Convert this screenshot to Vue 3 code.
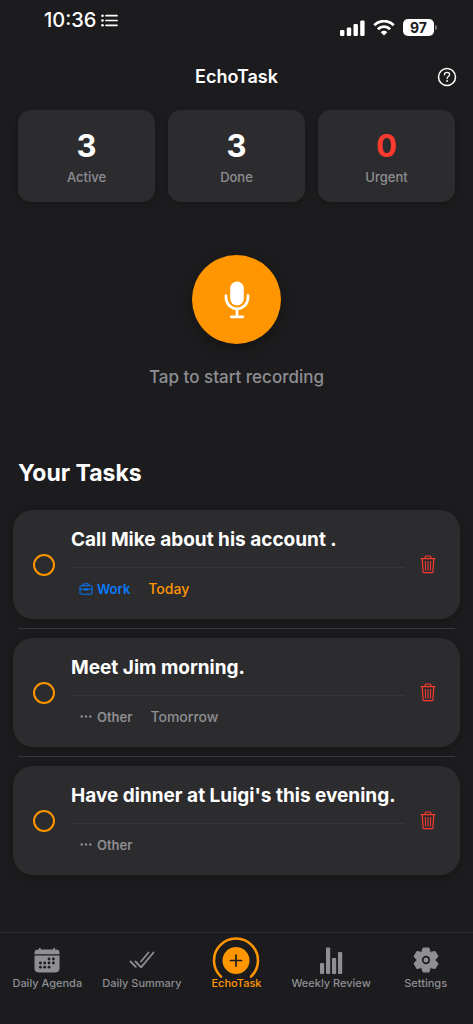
<script setup>
import { ref } from 'vue'

const stats = [
  { value: 3, label: 'Active' },
  { value: 3, label: 'Done' },
  { value: 0, label: 'Urgent', urgent: true },
]

const tasks = ref([
  { id: 1, title: 'Call Mike about his account .', category: 'Work', due: 'Today', done: false },
  { id: 2, title: 'Meet Jim morning.', category: 'Other', due: 'Tomorrow', done: false },
  { id: 3, title: "Have dinner at Luigi's this evening.", category: 'Other', due: '', done: false },
])

const tabs = [
  { id: 'agenda', label: 'Daily Agenda' },
  { id: 'summary', label: 'Daily Summary' },
  { id: 'echo', label: 'EchoTask' },
  { id: 'review', label: 'Weekly Review' },
  { id: 'settings', label: 'Settings' },
]
const active = ref('echo')

const calendarDots = [
  [15, 12], [19.4, 12],
  [6.4, 16], [10.7, 16], [15, 16], [19.4, 16],
  [6.4, 20.2], [10.7, 20.2], [15, 20.2],
]

const gearTeeth = [0, 60, 120, 180, 240, 300]

function removeTask(id) {
  tasks.value = tasks.value.filter((t) => t.id !== id)
}
</script>

<template>
  <div class="screen">
    <div class="status">
      <div class="clock">
        <span>10:36</span>
        <svg width="17" height="13" viewBox="0 0 17 13" aria-hidden="true">
          <g fill="#fff">
            <circle cx="1.5" cy="1.7" r="1.3" /><circle cx="1.5" cy="6.5" r="1.3" /><circle cx="1.5" cy="11.3" r="1.3" />
          </g>
          <path d="M5 1.7h11M5 6.5h11M5 11.3h11" stroke="#fff" stroke-width="1.7" stroke-linecap="round" />
        </svg>
      </div>
      <div class="signals">
        <svg width="25" height="16" viewBox="0 0 25 16" fill="#fff" aria-hidden="true">
          <rect x="0" y="10" width="4.4" height="6" rx="1.2" />
          <rect x="6.8" y="7.5" width="4.4" height="8.5" rx="1.2" />
          <rect x="13.5" y="4" width="4.4" height="12" rx="1.2" />
          <rect x="20.2" y="0.5" width="4.4" height="15.5" rx="1.2" />
        </svg>
        <svg width="22" height="16" viewBox="0 0 22 16" aria-hidden="true">
          <g fill="none" stroke="#fff" stroke-width="2.9">
            <path d="M1.3 5.2a13.7 13.7 0 0 1 19.4 0" />
            <path d="M4.9 9.2a8.6 8.6 0 0 1 12.2 0" />
          </g>
          <path d="M7.7 12.2a4.7 4.7 0 0 1 6.6 0L11 15.6z" fill="#fff" />
        </svg>
        <div class="battery">97</div>
      </div>
    </div>

    <header class="header">
      <h1>EchoTask</h1>
      <button class="help" type="button" aria-label="Help">
        <svg width="20" height="20" viewBox="0 0 20 20" fill="none" stroke="#fff" aria-hidden="true">
          <circle cx="10" cy="10" r="8.5" stroke-width="1.5" />
          <path d="M7.4 7.8c0-1.6 1.1-2.5 2.6-2.5s2.6.9 2.6 2.3c0 1.9-2.5 2-2.5 4" stroke-width="1.3" stroke-linecap="round" />
          <circle cx="10.1" cy="14" r=".9" fill="#fff" stroke="none" />
        </svg>
      </button>
    </header>

    <main>
      <section class="stats">
        <div v-for="s in stats" :key="s.label" class="stat">
          <strong :class="{ urgent: s.urgent }">{{ s.value }}</strong>
          <span>{{ s.label }}</span>
        </div>
      </section>

      <section class="record">
        <button class="mic" type="button" aria-label="Start recording">
          <svg width="28" height="40" viewBox="0 0 28 40" aria-hidden="true">
            <rect x="7.2" y="1.5" width="13.6" height="24" rx="6.8" fill="#fff" />
            <path d="M3 15.5v2.3a11 11 0 0 0 22 0v-2.3M14 29v8M8.3 36.8h11.4" fill="none" stroke="#fff" stroke-width="2.7" stroke-linecap="round" />
          </svg>
        </button>
        <p>Tap to start recording</p>
      </section>

      <section class="tasks">
        <h2>Your Tasks</h2>
        <ul>
          <li v-for="t in tasks" :key="t.id">
            <article class="card">
              <input :id="'task-' + t.id" v-model="t.done" type="checkbox" />
              <div class="body">
                <label :for="'task-' + t.id">{{ t.title }}</label>
                <div class="meta">
                  <span class="tag" :class="{ work: t.category === 'Work' }">
                    <svg v-if="t.category === 'Work'" width="14" height="12" viewBox="0 0 14 12" fill="none" stroke="currentColor" aria-hidden="true">
                      <rect x="1" y="2.7" width="12" height="8.5" rx="1.2" />
                      <path d="M4 2.7V1.6q0-.8.8-.8h4.4q.8 0 .8.8v1.1M1 6.2h12" />
                      <path d="M4.8 6.5h4.4" stroke-width="1.7" />
                    </svg>
                    <svg v-else width="14" height="12" viewBox="0 0 14 12" fill="currentColor" aria-hidden="true">
                      <circle cx="2.7" cy="5.5" r="1.2" /><circle cx="7" cy="5.5" r="1.2" /><circle cx="11.3" cy="5.5" r="1.2" />
                    </svg>
                    {{ t.category }}
                  </span>
                  <span v-if="t.due" class="due" :class="{ today: t.due === 'Today' }">{{ t.due }}</span>
                </div>
              </div>
              <button class="delete" type="button" :aria-label="'Delete ' + t.title" @click="removeTask(t.id)">
                <svg width="16" height="19" viewBox="0 0 16 19" fill="none" stroke="#ff3b30" stroke-linecap="round" stroke-linejoin="round" aria-hidden="true">
                  <path d="M1 3.7h14M5.2 3.5V2q0-1 1-1h3.6q1 0 1 1v1.5" stroke-width="1.2" />
                  <path d="M2.2 3.9l.8 12.6q.1 1.2 1.3 1.2h7.4q1.2 0 1.3-1.2l.8-12.6" stroke-width="1.2" />
                  <path d="M5.3 6.5l.3 8.7M8 6.5v8.7M10.7 6.5l-.3 8.7" />
                </svg>
              </button>
            </article>
          </li>
        </ul>
      </section>
    </main>

    <nav class="tabs">
      <a v-for="tab in tabs" :key="tab.id" :href="'#' + tab.id" :class="{ active: active === tab.id }" @click="active = tab.id">
        <span class="icon">
          <svg v-if="tab.id === 'agenda'" width="26" height="26" viewBox="0 0 26 26" aria-hidden="true">
            <path d="M.5 7.3V6Q.5 2.6 4 2.6h1V1.6a.9.9 0 0 1 1.8 0v1h12.4v-1a.9.9 0 0 1 1.8 0v1h1q3.5 0 3.5 3.4v1.3z" fill="currentColor" />
            <path d="M.5 8.6h25v13q0 3.8-3.8 3.8H4.3Q.5 25.400.5 21.600z" fill="currentColor" />
            <circle v-for="(d, i) in calendarDots" :key="i" :cx="d[0]" :cy="d[1]" r="1.4" fill="#1c1c1e" />
          </svg>
          <svg v-else-if="tab.id === 'summary'" width="26" height="26" viewBox="0 0 26 26" fill="none" stroke="currentColor" stroke-width="1.8" stroke-linecap="round" stroke-linejoin="round" aria-hidden="true">
            <path d="M1.500 14.500l5.300 5.300M6.500 14.500l5.600 5.800L24.500 5.500M12 14.500l7.500-9" />
          </svg>
          <svg v-else-if="tab.id === 'echo'" class="ring" width="48" height="46" viewBox="0 0 48 46" aria-hidden="true">
            <path d="M9 39.600A22 22 0 1 1 39 39.600" fill="none" stroke="currentColor" stroke-width="2.500" stroke-linecap="round" />
            <circle cx="24" cy="23.500" r="13.500" fill="currentColor" />
            <path d="M24 18v11M18.500 23.500h11" stroke="#1c1c1e" stroke-width="1.700" stroke-linecap="round" />
          </svg>
          <svg v-else-if="tab.id === 'review'" width="24" height="27" viewBox="0 0 24 27" fill="currentColor" aria-hidden="true">
            <rect x="1" y="16" width="4.2" height="11" rx="1" />
            <rect x="7" y=".5" width="4.2" height="26.5" rx="1" />
            <rect x="13" y="11" width="4.2" height="16" rx="1" />
            <rect x="19" y="5" width="4.2" height="22" rx="1" />
          </svg>
          <svg v-else width="26" height="26" viewBox="-13 -13 26 26" aria-hidden="true">
            <circle r="9.6" fill="currentColor" />
            <path v-for="a in gearTeeth" :key="a" d="M-4.6-8.4L-3.4-12q.2-.6.9-.6h5q.7 0 .9.6l1.2 3.6z" :transform="`rotate(${a})`" fill="currentColor" />
            <circle r="3.3" fill="none" stroke="#1c1c1e" stroke-width="1.7" />
          </svg>
        </span>
        <span class="name">{{ tab.label }}</span>
      </a>
    </nav>
  </div>
</template>

<style>
body {
  background: #1c1c1e;
}
</style>

<style scoped>
.screen {
  display: flex;
  flex-direction: column;
  min-height: 100vh;
  background: #1c1c1e;
  color: #fff;
  font-family: Inter, "Liberation Sans", sans-serif;
}
h1, h2, p, ul {
  margin: 0;
  padding: 0;
}
button {
  border: 0;
  padding: 0;
  background: none;
  cursor: pointer;
}
svg {
  display: block;
  flex: none;
}
.status {
  display: flex;
  justify-content: space-between;
  align-items: flex-end;
  padding: 8px 39px 0 44px;
}
.clock {
  display: flex;
  align-items: center;
  gap: 5px;
  padding-bottom: 6px;
  font-size: 20px;
  line-height: 24px;
  font-weight: 500;
}
.signals {
  display: flex;
  align-items: center;
  gap: 8px;
  padding-bottom: 2px;
}
.battery {
  position: relative;
  width: 31px;
  border-radius: 5px;
  background: #fff;
  color: #1c1c1e;
  font-size: 14px;
  line-height: 17px;
  font-weight: 700;
  text-align: center;
}
.battery::after {
  content: "";
  position: absolute;
  right: -3px;
  top: 6px;
  width: 2px;
  height: 5px;
  border-radius: 0 2px 2px 0;
  background: #77777a;
}
.header {
  display: grid;
  grid-template-columns: 1fr auto 1fr;
  align-items: center;
  margin-top: 26px;
  padding: 0 16px;
}
h1 {
  grid-column: 2;
  font-size: 18px;
  line-height: 26px;
  font-weight: 600;
}
.help {
  justify-self: end;
}
main {
  flex: 1;
}
.stats {
  display: grid;
  grid-template-columns: repeat(3, 1fr);
  gap: 13px;
  margin-top: 20px;
  padding: 0 18px;
}
.stat {
  display: flex;
  flex-direction: column;
  align-items: center;
  gap: 4px;
  padding: 18px 0 16px;
  border-radius: 13px;
  background: #2c2c2e;
  box-shadow: 0 2px 6px rgba(0, 0, 0, 0.2);
}
.stat strong {
  font-size: 31px;
  line-height: 36px;
  font-weight: 700;
}
.stat strong.urgent {
  color: #ff3b30;
}
.stat span {
  color: #8e8e93;
  font-size: 13px;
  line-height: 18px;
  font-weight: 500;
}
.record {
  display: flex;
  flex-direction: column;
  align-items: center;
  gap: 22px;
  margin-top: 53px;
}
.mic {
  display: grid;
  place-items: center;
  width: 89px;
  height: 89px;
  border-radius: 50%;
  background: #ff9500;
  box-shadow: 0 4px 14px rgba(0, 0, 0, 0.3);
}
.record p {
  color: #8e8e93;
  font-size: 17px;
  line-height: 22px;
  font-weight: 500;
}
.tasks {
  margin-top: 69px;
  padding: 0 13px;
}
h2 {
  padding: 0 5px;
  font-size: 23px;
  line-height: 32px;
  font-weight: 700;
}
ul {
  margin-top: 21px;
  list-style: none;
}
li + li::before {
  content: "";
  display: block;
  height: 1px;
  margin: 9px 5px;
  background: #38383a;
}
.card {
  display: flex;
  align-items: center;
  padding: 14px 24px 14px 20px;
  border-radius: 20px;
  background: #2c2c2e;
  box-shadow: 0 2px 8px rgba(0, 0, 0, 0.2);
}
input {
  appearance: none;
  flex: none;
  width: 22px;
  height: 22px;
  margin: 0;
  border: 2px solid #ff9500;
  border-radius: 50%;
}
input:checked {
  background: #ff9500;
}
.body {
  flex: 1;
  min-width: 0;
  margin: 0 15px 0 16px;
}
.body label {
  display: block;
  padding: 2px 0 14px;
  border-bottom: 1px solid #363638;
  font-size: 19px;
  line-height: 27px;
  font-weight: 700;
}
.meta {
  display: flex;
  align-items: center;
  gap: 18px;
  padding: 12px 0 7px 8px;
  color: #8e8e93;
  font-size: 13px;
  line-height: 18px;
  font-weight: 600;
}
.tag {
  display: flex;
  align-items: center;
  gap: 4px;
}
.tag.work {
  color: #0a7aff;
}
.due {
  font-size: 14px;
  font-weight: 500;
}
.due.today {
  color: #ff9500;
}
.tabs {
  display: grid;
  grid-template-columns: repeat(5, 1fr);
  padding: 13px 0 33px;
  border-top: 1px solid #2a2a2c;
}
.tabs a {
  display: flex;
  flex-direction: column;
  align-items: center;
  gap: 1px;
  color: #8e8e93;
  text-decoration: none;
}
.icon {
  display: grid;
  place-items: center;
  height: 28px;
}
.ring {
  margin: -12px 0;
}
.name {
  font-size: 11px;
  line-height: 16px;
  font-weight: 500;
  white-space: nowrap;
}
.tabs a.active {
  color: #ff9500;
}
</style>
